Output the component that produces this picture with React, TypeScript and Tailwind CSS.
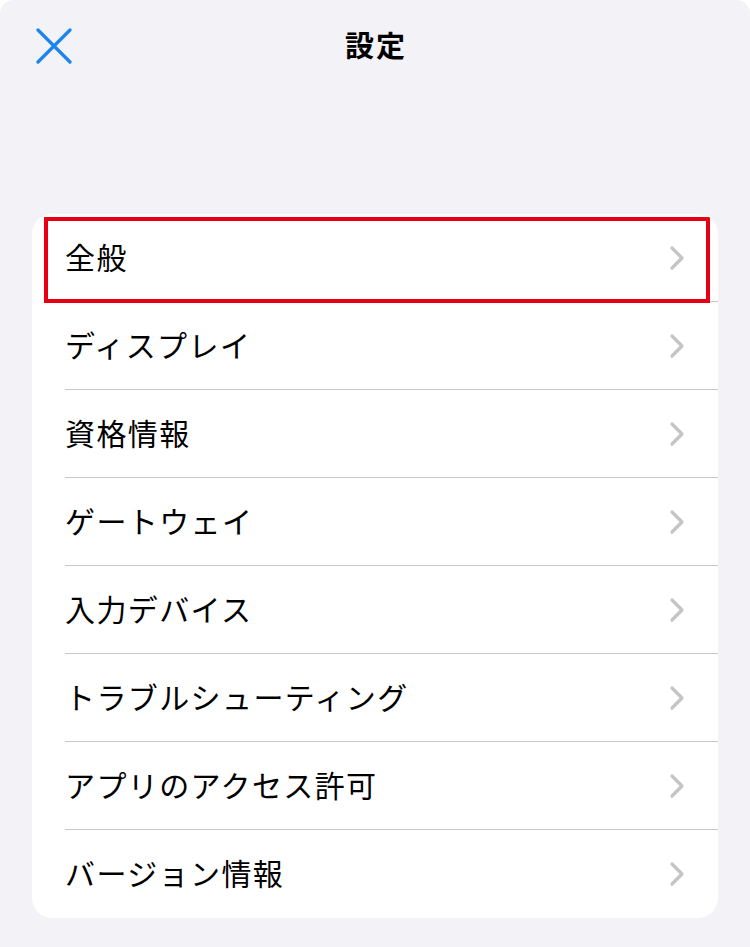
import React from 'react';

const ITEMS = [
  '全般',
  'ディスプレイ',
  '資格情報',
  'ゲートウェイ',
  '入力デバイス',
  'トラブルシューティング',
  'アプリのアクセス許可',
  'バージョン情報',
];

function Chevron() {
  return (
    <svg width="18" height="26" viewBox="0 0 18 26" className="shrink-0">
      <path d="M4 3 L14 13 L4 23" fill="none" stroke="#c4c4c7" strokeWidth="3.2" strokeLinecap="round" strokeLinejoin="round" />
    </svg>
  );
}

export default function App() {
  return (
    <div
      className="min-h-[947px] w-[750px] bg-white"
      style={{ fontFamily: '"Noto Sans CJK JP", "Noto Sans", sans-serif' }}
    >
      <div className="min-h-[947px] bg-[#f2f2f7] rounded-t-[14px] pt-[14px]">
        {/* Header */}
        <div className="relative h-[62px] flex items-center justify-center">
          <button className="absolute left-[36px] top-[14px] w-[36px] h-[36px] flex items-center justify-center">
            <svg width="36" height="36" viewBox="0 0 36 36">
              <path d="M2 2 L34 34 M34 2 L2 34" stroke="#1a84f0" strokeWidth="3.2" strokeLinecap="round" />
            </svg>
          </button>
          <h1 className="text-[29px] font-bold text-black leading-none tracking-[2px] pl-[2px] -mt-[2px]">設定</h1>
        </div>

        {/* List */}
        <div className="mt-[138px] mx-[32px] bg-white rounded-[20px] overflow-hidden">
          {ITEMS.map((label, i) => (
            <div key={label} className="relative pl-[33px]">
              <div
                className={`h-[88px] flex items-center justify-between pr-[32px] ${
                  i < ITEMS.length - 1 ? 'border-b border-[#c8c8cc]' : ''
                }`}
              >
                <span className="text-[30px] text-black leading-none tracking-[1.4px] -mt-[4px]">{label}</span>
                <Chevron />
              </div>
              {i === 0 && (
                <div className="absolute left-[12px] top-[3px] w-[666px] h-[86px] border-[4px] border-[#e60012] pointer-events-none" />
              )}
            </div>
          ))}
        </div>
      </div>
    </div>
  );
}
